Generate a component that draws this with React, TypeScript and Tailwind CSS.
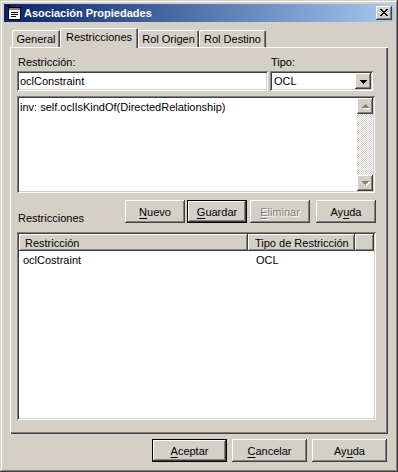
import React from "react";

const raised =
  "shadow-[inset_-1px_-1px_#404040,inset_1px_1px_#ffffff,inset_-2px_-2px_#808080,inset_2px_2px_#d4d0c8]";
const sunken =
  "shadow-[inset_1px_1px_#808080,inset_-1px_-1px_#ffffff,inset_2px_2px_#404040,inset_-2px_-2px_#d4d0c8]";

function Pixels({ rows, color, shadow }: { rows: string[]; color: string; shadow?: string }) {
  const w = rows[0].length;
  const h = rows.length;
  const cells: React.ReactNode[] = [];
  rows.forEach((r, y) =>
    r.split("").forEach((c, x) => {
      if (c === "x") {
        if (shadow) cells.push(<rect key={`s${x}-${y}`} x={x + 1} y={y + 1} width={1} height={1} fill={shadow} />);
      }
    })
  );
  rows.forEach((r, y) =>
    r.split("").forEach((c, x) => {
      if (c === "x") cells.push(<rect key={`${x}-${y}`} x={x} y={y} width={1} height={1} fill={color} />);
    })
  );
  return (
    <svg width={w + 1} height={h + 1} viewBox={`0 0 ${w + 1} ${h + 1}`} shapeRendering="crispEdges">
      {cells}
    </svg>
  );
}

const arrowDown = ["xxxxxxx", ".xxxxx.", "..xxx..", "...x..."];
const arrowUp = ["...x...", "..xxx..", ".xxxxx.", "xxxxxxx"];
const closeX = ["xx....xx", ".xx..xx.", "..xxxx..", "...xx...", "..xxxx..", ".xx..xx.", "xx....xx"];

function Btn({
  children,
  className,
  def,
  disabled,
}: {
  children: React.ReactNode;
  className: string;
  def?: boolean;
  disabled?: boolean;
}) {
  return (
    <div
      className={`h-[23px] flex items-center justify-center ${raised} ${def ? "border border-black" : ""} ${
        disabled ? "text-[#808080] [text-shadow:1px_1px_0_#ffffff]" : ""
      } ${className}`}
    >
      {children}
    </div>
  );
}

const U = ({ c }: { c: string }) => <span className="underline decoration-1 underline-offset-[2px]">{c}</span>;

function PropsIcon() {
  return (
    <svg width="16" height="16" viewBox="0 0 16 16" shapeRendering="crispEdges">
      <rect x="2" y="2" width="13" height="13" fill="#000" />
      <rect x="3" y="3" width="11" height="11" fill="#fff" />
      <rect x="3" y="3" width="11" height="2" fill="#808080" />
      <rect x="5" y="7" width="7" height="1" fill="#000" />
      <rect x="5" y="9" width="7" height="1" fill="#000" />
      <rect x="5" y="11" width="5" height="1" fill="#000" />
      <rect x="1" y="0" width="2" height="2" fill="#000" />
      <rect x="0" y="1" width="4" height="1" fill="#000" />
      <rect x="3" y="2" width="3" height="1" fill="#000" />
    </svg>
  );
}

export default function App() {
  return (
    <div className="w-[398px] h-[472px] bg-[#d4d0c8] p-[4px] flex flex-col font-['Liberation_Sans',Arial,sans-serif] text-[11px] leading-[14px] text-black shadow-[inset_-1px_-1px_#404040,inset_1px_1px_#d4d0c8,inset_-2px_-2px_#808080,inset_2px_2px_#ffffff]">
      {/* title bar */}
      <div className="h-[18px] flex items-center bg-linear-to-r from-[#0a246a] to-[#a6caf0] pl-[2px] pr-[2px]">
        <PropsIcon />
        <span className="ml-[2px] text-white font-bold text-[11px]">Asociación Propiedades</span>
        <div className={`ml-auto w-[16px] h-[14px] bg-[#d4d0c8] flex items-center justify-center pl-[1px] ${raised}`}>
          <Pixels rows={closeX} color="#000" />
        </div>
      </div>

      {/* tabs */}
      <div className="mt-[6px] ml-[6px] h-[19px] flex items-end pl-[2px] relative z-10">
        <div className="w-[48px] h-[17px] flex items-center justify-center rounded-t-[2px] shadow-[inset_1px_1px_#ffffff,inset_-1px_0_#404040,inset_-2px_0_#808080]">
          General
        </div>
        <div className="w-[78px] h-[20px] -mb-px pb-[3px] bg-[#d4d0c8] flex items-center justify-center rounded-t-[2px] shadow-[inset_1px_1px_#ffffff,inset_-1px_0_#404040,inset_-2px_0_#808080]">
          Restricciones
        </div>
        <div className="w-[61px] h-[17px] flex items-center justify-center rounded-t-[2px] shadow-[inset_1px_1px_#ffffff,inset_-1px_0_#404040,inset_-2px_0_#808080]">
          Rol Origen
        </div>
        <div className="w-[67px] h-[17px] flex items-center justify-center rounded-t-[2px] shadow-[inset_1px_1px_#ffffff,inset_-1px_0_#404040,inset_-2px_0_#808080]">
          Rol Destino
        </div>
      </div>

      {/* panel */}
      <div className="ml-[6px] w-[378px] h-[387px] pl-[7px] pt-[8px] shadow-[inset_1px_1px_#ffffff,inset_-1px_-1px_#404040,inset_-2px_-2px_#808080]">
        <div className="w-[359px] flex flex-col">
          <div className="flex">
            <div className="w-[253px] pl-[1px]">Restricción:</div>
            <div className="pl-[1px]">Tipo:</div>
          </div>
          <div className="mt-[2px] flex gap-[2px]">
            <div className={`w-[251px] h-[20px] bg-white flex items-center pl-[3px] ${sunken}`}>oclConstraint</div>
            <div className={`w-[103px] h-[20px] bg-white flex items-center pl-[3px] p-[2px] ${sunken}`}>
              <span className="flex-1 pl-[1px]">OCL</span>
              <div className={`w-[16px] h-[16px] bg-[#d4d0c8] flex items-center justify-center pt-[2px] pl-[1px] ${raised}`}>
                <Pixels rows={arrowDown} color="#000" />
              </div>
            </div>
          </div>
          <div className={`mt-[5px] w-[358px] h-[97px] bg-white flex p-[2px] ${sunken}`}>
            <div className="flex-1 pl-[1px] pt-[2px]">inv: self.oclIsKindOf(DirectedRelationship)</div>
            <div className="w-[16px] flex flex-col">
              <div className={`h-[16px] bg-[#d4d0c8] flex items-center justify-center pl-[1px] ${raised}`}>
                <Pixels rows={arrowUp} color="#808080" shadow="#ffffff" />
              </div>
              <div className="flex-1 bg-[repeating-conic-gradient(#d4d0c8_0%_25%,#ffffff_0%_50%)] bg-[length:2px_2px]" />
              <div className={`h-[16px] bg-[#d4d0c8] flex items-center justify-center pl-[1px] pt-[1px] ${raised}`}>
                <Pixels rows={arrowDown} color="#808080" shadow="#ffffff" />
              </div>
            </div>
          </div>
          <div className="mt-[7px] flex">
            <div className="flex-1 pl-[1px] pt-[11px]">Restricciones</div>
            <Btn className="w-[60px]">
              <U c="N" />uevo
            </Btn>
            <Btn className="w-[60px] ml-[2px]" def>
              <U c="G" />uardar
            </Btn>
            <Btn className="w-[60px] ml-[3px]" disabled>
              <span className="underline decoration-1 underline-offset-[2px]">E</span>liminar
            </Btn>
            <Btn className="w-[60px] ml-[6px]">
              Ay<U c="u" />da
            </Btn>
          </div>
          <div className={`mt-[7px] w-[359px] h-[188px] bg-white p-[2px] flex flex-col ${sunken}`}>
            <div className="flex h-[17px]">
              <div className={`w-[229px] bg-[#d4d0c8] flex items-center pl-[6px] ${raised}`}>Restricción</div>
              <div className={`w-[107px] bg-[#d4d0c8] flex items-center pl-[7px] ${raised}`}>Tipo de Restricción</div>
              <div className={`flex-1 bg-[#d4d0c8] ${raised}`} />
            </div>
            <div className="flex h-[15px] items-center mt-[1px]">
              <div className="w-[229px] pl-[4px]">oclCostraint</div>
              <div className="pl-[8px]">OCL</div>
            </div>
          </div>
        </div>
      </div>

      {/* bottom buttons */}
      <div className="mt-[5px] flex justify-end pr-[7px] gap-[5px]">
        <Btn className="w-[75px]" def>
          <U c="A" />ceptar
        </Btn>
        <Btn className="w-[75px]">
          <U c="C" />ancelar
        </Btn>
        <Btn className="w-[75px]">
          Ay<U c="u" />da
        </Btn>
      </div>
    </div>
  );
}
